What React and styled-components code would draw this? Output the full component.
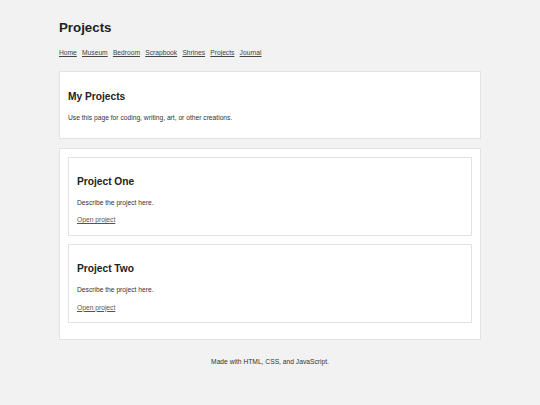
import React from "react";
import styled, { createGlobalStyle } from "styled-components";

const Global = createGlobalStyle`
  html, body { margin: 0; padding: 0; }
  body {
    background: #f2f2f2;
    color: #222;
    font-family: "Liberation Sans", Arial, sans-serif;
    font-size: 6.7px;
    line-height: 1.6;
  }
`;

const Page = styled.div`
  width: 422px;
  margin: 0 auto;
  padding-top: 17.3px;
`;

const Title = styled.h1`
  margin: 0 0 9.5px;
  font-size: 13.3px;
  font-weight: bold;
  color: #222;
`;

const Nav = styled.nav`
  display: flex;
  gap: 5.2px;
  margin-bottom: 12.7px;
`;

const NavLink = styled.a`
  color: #444;
  text-decoration: underline;
`;

const Card = styled.section`
  box-sizing: border-box;
  background: #fff;
  border: 1px solid #e2e2e2;
  padding: 8px;
  margin-bottom: 8.8px;
`;

const CardTitle = styled.h2`
  margin: 9px 0 6.8px;
  font-size: 10.2px;
  font-weight: bold;
  color: #222;
`;

const Text = styled.p`
  margin: 0 0 6.7px;
  color: #333;
`;

const ProjectCard = styled.article`
  background: #fff;
  border: 1px solid #e2e2e2;
  padding: 7.6px 8px 8.6px;
  margin-bottom: 8.1px;
`;

const ProjectTitle = styled.h3`
  margin: 8.4px 0 8.2px;
  font-size: 10.2px;
  font-weight: bold;
  color: #222;
`;

const ProjectText = styled.p`
  margin: 0 0 6.5px;
  color: #333;
`;

const OpenLink = styled.a`
  color: #555;
  text-decoration: underline;
`;

const Footer = styled.footer`
  text-align: center;
  color: #333;
  margin-top: 16.5px;
`;

const links = ["Home", "Museum", "Bedroom", "Scrapbook", "Shrines", "Projects", "Journal"];
const projects = ["Project One", "Project Two"];

export default function App() {
  return (
    <>
      <Global />
      <Page>
        <Title>Projects</Title>
        <Nav>
          {links.map((l) => (
            <NavLink key={l} href="#">{l}</NavLink>
          ))}
        </Nav>
        <Card>
          <CardTitle>My Projects</CardTitle>
          <Text>Use this page for coding, writing, art, or other creations.</Text>
        </Card>
        <Card>
          {projects.map((p) => (
            <ProjectCard key={p}>
              <ProjectTitle>{p}</ProjectTitle>
              <ProjectText>Describe the project here.</ProjectText>
              <OpenLink href="#">Open project</OpenLink>
            </ProjectCard>
          ))}
        </Card>
        <Footer>Made with HTML, CSS, and JavaScript.</Footer>
      </Page>
    </>
  );
}
